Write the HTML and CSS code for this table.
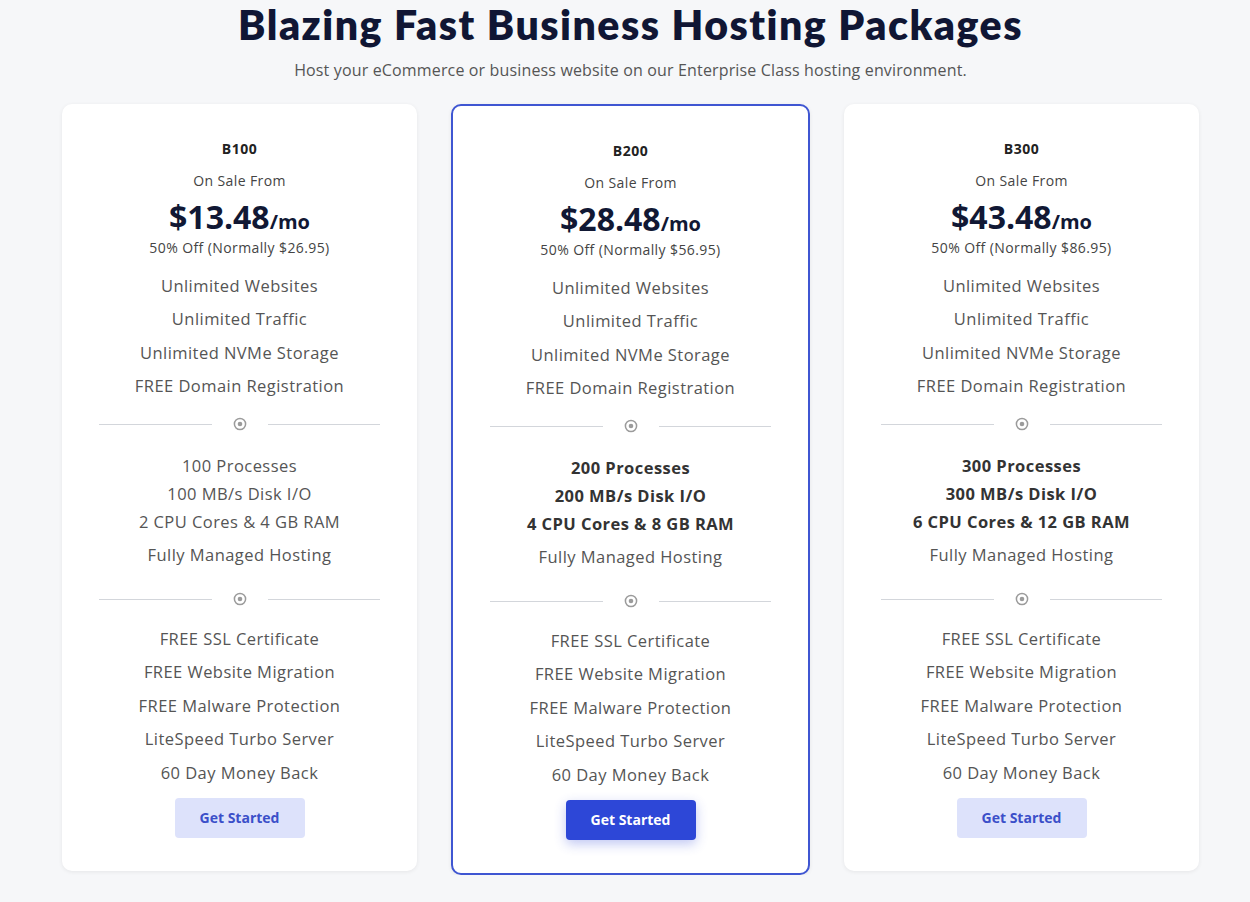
FILE: index.html
```html
<!DOCTYPE html>
<html lang="en">
<head>
    <meta charset="UTF-8">
    <meta name="viewport" content="width=device-width, initial-scale=1.0">
    <title>Business Hosting Packages</title>
    <link rel="stylesheet" href="styles.css">
</head>
<body>

    <div class="pagina">
        <h1 class="titulo">Blazing Fast Business Hosting Packages</h1>
        <p class="subtitulo">Host your eCommerce or business website on our Enterprise Class hosting environment.</p>

        <div class="planos">

            <div class="plano">
                <div class="plano-nome">B100</div>
                <div class="plano-venda">On Sale From</div>
                <div class="plano-preco">$13.48<span>/mo</span></div>
                <div class="plano-desconto">50% Off (Normally $26.95)</div>
                <ul class="lista">
                    <li>Unlimited Websites</li>
                    <li>Unlimited Traffic</li>
                    <li>Unlimited NVMe Storage</li>
                    <li>FREE Domain Registration</li>
                </ul>
                <div class="divisor"><span class="linha"></span><svg width="14" height="14" viewBox="0 0 14 14"><circle cx="7" cy="7" r="5.6" fill="none" stroke="#9b9b9b" stroke-width="1.5"/><circle cx="7" cy="7" r="2.3" fill="#9b9b9b"/></svg><span class="linha"></span></div>
                <ul class="lista lista-meio">
                    <li class="recursos">100 Processes<br>100 MB/s Disk I/O<br>2 CPU Cores &amp; 4 GB RAM</li>
                    <li>Fully Managed Hosting</li>
                </ul>
                <div class="divisor"><span class="linha"></span><svg width="14" height="14" viewBox="0 0 14 14"><circle cx="7" cy="7" r="5.6" fill="none" stroke="#9b9b9b" stroke-width="1.5"/><circle cx="7" cy="7" r="2.3" fill="#9b9b9b"/></svg><span class="linha"></span></div>
                <ul class="lista">
                    <li>FREE SSL Certificate</li>
                    <li>FREE Website Migration</li>
                    <li>FREE Malware Protection</li>
                    <li>LiteSpeed Turbo Server</li>
                    <li>60 Day Money Back</li>
                </ul>
                <a href="#" class="botao">Get Started</a>
            </div>

            <div class="plano destaque">
                <div class="plano-nome">B200</div>
                <div class="plano-venda">On Sale From</div>
                <div class="plano-preco">$28.48<span>/mo</span></div>
                <div class="plano-desconto">50% Off (Normally $56.95)</div>
                <ul class="lista">
                    <li>Unlimited Websites</li>
                    <li>Unlimited Traffic</li>
                    <li>Unlimited NVMe Storage</li>
                    <li>FREE Domain Registration</li>
                </ul>
                <div class="divisor"><span class="linha"></span><svg width="14" height="14" viewBox="0 0 14 14"><circle cx="7" cy="7" r="5.6" fill="none" stroke="#9b9b9b" stroke-width="1.5"/><circle cx="7" cy="7" r="2.3" fill="#9b9b9b"/></svg><span class="linha"></span></div>
                <ul class="lista lista-meio">
                    <li class="recursos forte">200 Processes<br>200 MB/s Disk I/O<br>4 CPU Cores &amp; 8 GB RAM</li>
                    <li>Fully Managed Hosting</li>
                </ul>
                <div class="divisor"><span class="linha"></span><svg width="14" height="14" viewBox="0 0 14 14"><circle cx="7" cy="7" r="5.6" fill="none" stroke="#9b9b9b" stroke-width="1.5"/><circle cx="7" cy="7" r="2.3" fill="#9b9b9b"/></svg><span class="linha"></span></div>
                <ul class="lista">
                    <li>FREE SSL Certificate</li>
                    <li>FREE Website Migration</li>
                    <li>FREE Malware Protection</li>
                    <li>LiteSpeed Turbo Server</li>
                    <li>60 Day Money Back</li>
                </ul>
                <a href="#" class="botao">Get Started</a>
            </div>

            <div class="plano">
                <div class="plano-nome">B300</div>
                <div class="plano-venda">On Sale From</div>
                <div class="plano-preco">$43.48<span>/mo</span></div>
                <div class="plano-desconto">50% Off (Normally $86.95)</div>
                <ul class="lista">
                    <li>Unlimited Websites</li>
                    <li>Unlimited Traffic</li>
                    <li>Unlimited NVMe Storage</li>
                    <li>FREE Domain Registration</li>
                </ul>
                <div class="divisor"><span class="linha"></span><svg width="14" height="14" viewBox="0 0 14 14"><circle cx="7" cy="7" r="5.6" fill="none" stroke="#9b9b9b" stroke-width="1.5"/><circle cx="7" cy="7" r="2.3" fill="#9b9b9b"/></svg><span class="linha"></span></div>
                <ul class="lista lista-meio">
                    <li class="recursos forte">300 Processes<br>300 MB/s Disk I/O<br>6 CPU Cores &amp; 12 GB RAM</li>
                    <li>Fully Managed Hosting</li>
                </ul>
                <div class="divisor"><span class="linha"></span><svg width="14" height="14" viewBox="0 0 14 14"><circle cx="7" cy="7" r="5.6" fill="none" stroke="#9b9b9b" stroke-width="1.5"/><circle cx="7" cy="7" r="2.3" fill="#9b9b9b"/></svg><span class="linha"></span></div>
                <ul class="lista">
                    <li>FREE SSL Certificate</li>
                    <li>FREE Website Migration</li>
                    <li>FREE Malware Protection</li>
                    <li>LiteSpeed Turbo Server</li>
                    <li>60 Day Money Back</li>
                </ul>
                <a href="#" class="botao">Get Started</a>
            </div>

        </div>
    </div>

</body>
</html>
```

FILE: styles.css
```css
body {
    font-family: 'Open Sans', sans-serif;
    background-color: #f6f7f9;
    color: #555;
    margin: 0;
    padding: 0;
}

.pagina {
    width: 1137px;
    margin: 0 0 0 62px;
}

.titulo {
    font-family: 'Lato', sans-serif;
    font-weight: 800;
    font-size: 41px;
    line-height: 50px;
    letter-spacing: 1.5px;
    color: #101634;
    text-align: center;
    margin: 0;
}

.subtitulo {
    font-size: 16px;
    line-height: 20px;
    letter-spacing: 0.15px;
    color: #555;
    text-align: center;
    margin: 10px 0 24px;
}

.planos {
    display: flex;
    gap: 34px;
    align-items: flex-start;
}

.plano {
    flex: 1;
    background: white;
    border-radius: 10px;
    padding: 35px 37px 33px;
    text-align: center;
    box-shadow: 0 1px 4px rgba(0, 0, 0, 0.07);
}

.destaque {
    border: 2px solid #3f56d2;
}

.plano-nome {
    font-size: 14px;
    font-weight: bold;
    line-height: 20px;
    letter-spacing: 0.5px;
    color: #222;
}

.plano-venda {
    font-size: 14px;
    line-height: 20px;
    letter-spacing: 0.4px;
    color: #444;
    margin-top: 12px;
}

.plano-preco {
    font-size: 32px;
    font-weight: bold;
    line-height: 38px;
    color: #111834;
    margin-top: 7px;
}

.plano-preco span {
    font-size: 20px;
    line-height: 0;
}

.plano-desconto {
    font-size: 14px;
    line-height: 18px;
    letter-spacing: 0.4px;
    color: #444;
    margin-top: 3px;
}

.lista {
    list-style: none;
    margin: 0;
    padding: 0;
}

.plano-desconto + .lista {
    margin-top: 12px;
}

.lista-meio {
    padding-bottom: 6px;
}

.lista li {
    font-size: 16.5px;
    line-height: 24px;
    letter-spacing: 0.45px;
    padding: 4.75px 0;
}

.lista li.recursos {
    line-height: 28px;
    padding-bottom: 2.75px;
}

.lista li.forte {
    font-weight: bold;
    color: #333;
}

.divisor {
    display: flex;
    align-items: center;
    gap: 21px;
    height: 14px;
    margin: 14px 0 16px;
}

.linha {
    flex: 1;
    height: 1px;
    background: #d3d6db;
}

.botao {
    display: block;
    width: 130px;
    margin: 8px auto 0;
    padding: 10px 0;
    line-height: 20px;
    font-size: 14px;
    font-weight: bold;
    color: #3b4fc9;
    background: #dde2fb;
    border-radius: 4px;
    text-decoration: none;
}

.destaque .botao {
    background: #2d47d7;
    color: white;
    box-shadow: 0 4px 12px rgba(45, 71, 215, 0.3);
}
```
